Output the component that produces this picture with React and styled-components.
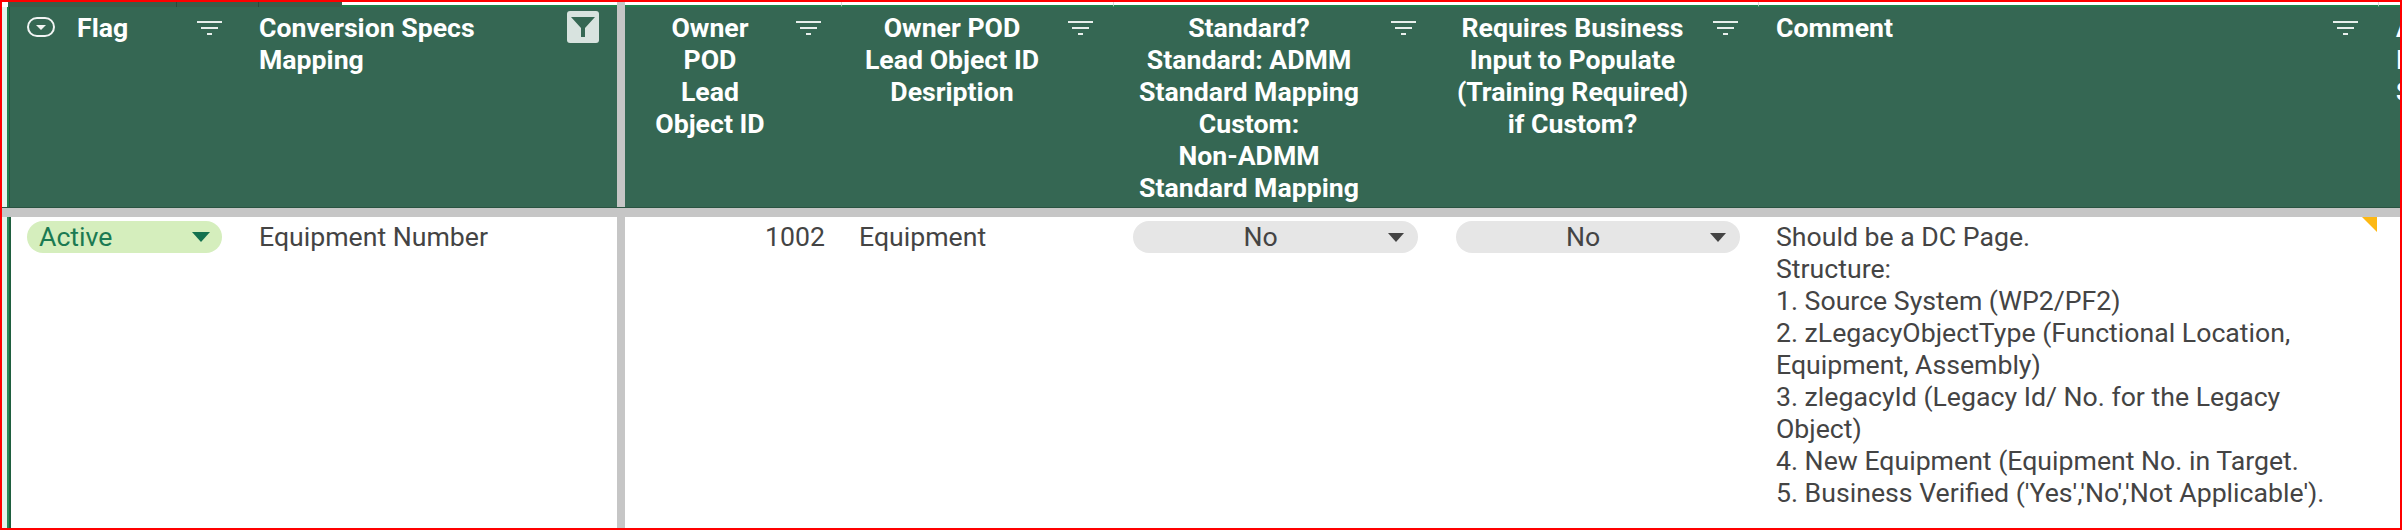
import React from "react"
import styled, { createGlobalStyle } from "styled-components"

const GRID = "5px 234px 376px 8px 217px 272px 323px 322px 620px 21px"
const TEXT_SIZE = "26.67px"

const GlobalStyle = createGlobalStyle`
  html, body {
    margin: 0;
    padding: 0;
    background: #fff;
  }
  body {
    font-family: Roboto, "Liberation Sans", sans-serif;
  }
`

const Frame = styled.div`
  box-sizing: border-box;
  width: 2402px;
  height: 530px;
  border: 2px solid #ff0000;
  overflow: hidden;
  display: flex;
  flex-direction: column;
  background: #fff;
`

const TopStrip = styled.div`
  display: flex;
  height: 5px;
  flex: none;
`

const StripSegment = styled.div`
  box-sizing: border-box;
  width: ${p => p.$width}px;
  flex: ${p => (p.$grow ? 1 : "none")};
  background: ${p => (p.$dark ? "#3a5d4b" : p.$gray ? "#c6c6c6" : "#fff")};
  border-bottom: ${p => (p.$dark || p.$gray || p.$blank ? "none" : "2px solid #1f7f4c")};
  border-right: ${p => (p.$line ? `1px solid ${p.$dark ? "#2c4a3b" : "#d9d9d9"}` : "none")};
`

const HeaderRow = styled.div`
  display: grid;
  grid-template-columns: ${GRID};
  height: 201px;
  flex: none;
  box-sizing: border-box;
  background: #356753;
  border-bottom: 1px solid #2a5341;
`

const Gutter = styled.div`
  background: ${p => p.$tint || "#fff"};
`

const Divider = styled.div`
  background: #c6c6c6;
`

const HeaderCell = styled.div`
  box-sizing: border-box;
  display: flex;
  align-items: flex-start;
  min-width: 0;
  overflow: hidden;
  padding: 5px ${p => p.$right ?? 21}px 0 ${p => p.$left ?? 19}px;
  border-left: ${p => (p.$first ? "2px solid #23804f" : "none")};
  box-shadow: ${p => (p.$first ? "inset 1px 0 #2a5341" : "none")};
  color: #fff;
`

const Title = styled.div`
  flex: 1;
  min-width: 0;
  font-size: ${TEXT_SIZE};
  line-height: 32px;
  font-weight: 700;
  white-space: pre-line;
  text-align: ${p => (p.$center ? "center" : "left")};
`

const FilterIcon = styled.svg`
  flex: none;
  width: 25px;
  height: 15px;
  margin-top: 9px;
  margin-left: ${p => p.$gap ?? 0}px;
`

const ActiveFilter = styled.div`
  flex: none;
  width: 32px;
  height: 32px;
  margin-top: -1px;
  border-radius: 3px;
  background: #d8e3df;
  display: flex;
  align-items: center;
  justify-content: center;
`

const DropdownIcon = styled.svg`
  flex: none;
  width: 28px;
  height: 20px;
  margin: 5px 22px 0 0;
`

const GrayBar = styled.div`
  height: 9px;
  flex: none;
  background: #c6c6c6;
`

const BodyRow = styled.div`
  display: grid;
  grid-template-columns: ${GRID};
  flex: 1;
  min-height: 0;
  color: #444;
  font-size: ${TEXT_SIZE};
  line-height: 32px;
`

const Cell = styled.div`
  position: relative;
  box-sizing: border-box;
  padding: 4px ${p => p.$right ?? 18}px 0 ${p => p.$left ?? 19}px;
  text-align: ${p => p.$align || "left"};
  white-space: pre-line;
  border-left: ${p => (p.$first ? "2px solid #2a8a5a" : "none")};
  box-shadow: ${p => (p.$first ? "inset 2px 0 #1f5f3f" : "none")};
`

const Pill = styled.div`
  display: flex;
  align-items: center;
  height: 32px;
  border-radius: 16px;
  padding: 0 ${p => (p.$status ? 12 : 14)}px 0 ${p => (p.$status ? 12 : 0)}px;
  background: ${p => (p.$status ? "#d5eebd" : "#e6e6e6")};
  color: ${p => (p.$status ? "#1b7a52" : "#444")};
`

const PillLabel = styled.span`
  flex: 1;
  text-align: ${p => (p.$center ? "center" : "left")};
`

const Caret = styled.svg`
  flex: none;
  width: ${p => (p.$status ? 18 : 16)}px;
  height: ${p => (p.$status ? 10 : 9)}px;
  fill: ${p => (p.$status ? "#13714f" : "#444")};
`

const CommentFlag = styled.div`
  position: absolute;
  top: 0;
  right: 2px;
  width: 0;
  height: 0;
  border-top: 15px solid #fdb813;
  border-left: 15px solid transparent;
`

const Filter = ({ gap }) => (
  <FilterIcon $gap={gap} viewBox="0 0 25 15">
    <rect x="0" y="0" width="25" height="2" fill="#e8efec" />
    <rect x="4" y="6" width="17" height="2" fill="#e8efec" />
    <rect x="10" y="12" width="5" height="2" fill="#e8efec" />
  </FilterIcon>
)

const COMMENT = `Should be a DC Page.
Structure:
1. Source System (WP2/PF2)
2. zLegacyObjectType (Functional Location,
Equipment, Assembly)
3. zlegacyId (Legacy Id/ No. for the Legacy
Object)
4. New Equipment (Equipment No. in Target.
5. Business Verified ('Yes','No','Not Applicable').`

const Pick = ({ label, status }) => (
  <Pill $status={status}>
    <PillLabel $center={!status}>{label}</PillLabel>
    <Caret $status={status} viewBox="0 0 18 10" preserveAspectRatio="none">
      <path d="M0 0h18L9 10z" />
    </Caret>
  </Pill>
)

export default function App() {
  return (
    <>
      <GlobalStyle />
      <Frame>
        <TopStrip>
          <StripSegment $width={6} $blank />
          <StripSegment $width={169} $dark $line />
          <StripSegment $width={82} $dark $line />
          <StripSegment $width={83} $dark />
          <StripSegment $width={275} />
          <StripSegment $width={8} $gray />
          <StripSegment $width={217} $line />
          <StripSegment $width={272} $line />
          <StripSegment $width={323} />
          <StripSegment $width={322} $line />
          <StripSegment $width={620} $line />
          <StripSegment $grow />
        </TopStrip>
        <HeaderRow>
          <Gutter $tint="#e6f3ec" />
          <HeaderCell $first $left={18} $right={19}>
            <DropdownIcon viewBox="0 0 28 20">
              <rect x="1" y="1" width="26" height="18" rx="9" fill="none" stroke="#f2f5f4" strokeWidth="2" />
              <path d="M9 8h10l-5 5z" fill="#f2f5f4" />
            </DropdownIcon>
            <Title>Flag</Title>
            <Filter />
          </HeaderCell>
          <HeaderCell $left={18} $right={18}>
            <Title>{"Conversion Specs\nMapping"}</Title>
            <ActiveFilter>
              <svg width="24" height="20" viewBox="0 0 24 20">
                <path d="M0 0h24l-10 11v9h-4v-9z" fill="#356753" />
              </svg>
            </ActiveFilter>
          </HeaderCell>
          <Divider />
          <HeaderCell>
            <Title $center>{"Owner\nPOD\nLead\nObject ID"}</Title>
            <Filter gap={20} />
          </HeaderCell>
          <HeaderCell>
            <Title $center>{"Owner POD\nLead Object ID\nDesription"}</Title>
            <Filter gap={25} />
          </HeaderCell>
          <HeaderCell>
            <Title $center>{"Standard?\nStandard: ADMM\nStandard Mapping\nCustom:\nNon-ADMM\nStandard Mapping"}</Title>
            <Filter gap={26} />
          </HeaderCell>
          <HeaderCell>
            <Title $center>{"Requires Business\nInput to Populate\n(Training Required)\nif Custom?"}</Title>
            <Filter gap={24} />
          </HeaderCell>
          <HeaderCell $left={17}>
            <Title>Comment</Title>
            <Filter />
          </HeaderCell>
          <HeaderCell $left={17} $right={0}>
            <Title>{"A\nI\nS"}</Title>
          </HeaderCell>
        </HeaderRow>
        <GrayBar />
        <BodyRow>
          <Gutter $tint="#e6f3ec" />
          <Cell $first $left={18} $right={19}>
            <Pick label="Active" status />
          </Cell>
          <Cell $left={18}>Equipment Number</Cell>
          <Divider />
          <Cell $align="right" $right={17}>1002</Cell>
          <Cell $left={17}>Equipment</Cell>
          <Cell $right={19}>
            <Pick label="No" />
          </Cell>
          <Cell $right={19}>
            <Pick label="No" />
          </Cell>
          <Cell $left={17}>
            {COMMENT}
            <CommentFlag />
          </Cell>
          <Cell />
        </BodyRow>
      </Frame>
    </>
  )
}
